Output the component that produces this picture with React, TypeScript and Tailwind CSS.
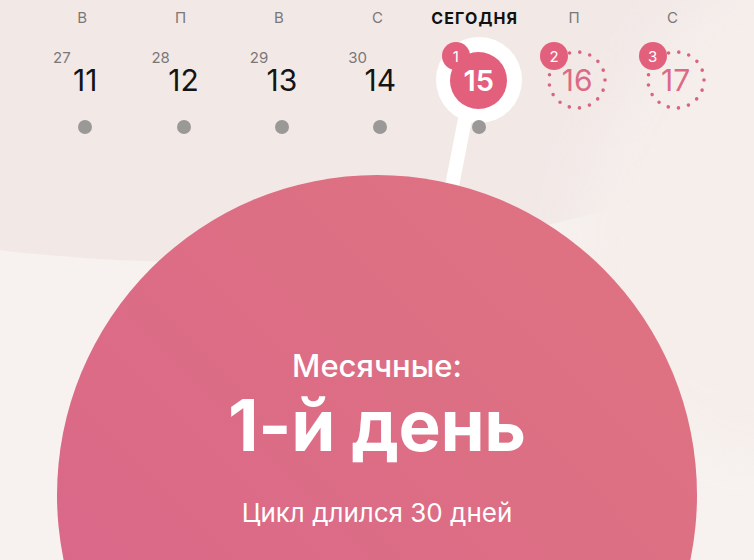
import React from "react";

type Day = {
  week: string;
  day: number;
  prev?: number;
  badge?: number;
  kind: "past" | "today" | "future";
};

const days: Day[] = [
  { week: "В", day: 11, prev: 27, kind: "past" },
  { week: "П", day: 12, prev: 28, kind: "past" },
  { week: "В", day: 13, prev: 29, kind: "past" },
  { week: "С", day: 14, prev: 30, kind: "past" },
  { week: "СЕГОДНЯ", day: 15, badge: 1, kind: "today" },
  { week: "П", day: 16, badge: 2, kind: "future" },
  { week: "С", day: 17, badge: 3, kind: "future" },
];

function Badge({ n }: { n: number }) {
  return (
    <div className="absolute left-[calc(50%-37px)] top-[-8px] flex h-[28px] w-[28px] items-center justify-center rounded-full bg-[#e3607c] text-[15px] leading-none text-white">
      {n}
    </div>
  );
}

function DayCell({ d }: { d: Day }) {
  if (d.kind === "today") {
    return (
      <div className="relative flex h-[60px] items-center justify-center">
        <div className="absolute left-[calc(50%-43px)] top-[-13px] h-[86px] w-[86px] rounded-full bg-white" />
        <div className="relative flex h-[57px] w-[57px] items-center justify-center rounded-full bg-[#e3607c]">
          <span className="text-[29px] font-semibold leading-none text-white">{d.day}</span>
        </div>
        <Badge n={d.badge!} />
      </div>
    );
  }
  if (d.kind === "future") {
    return (
      <div className="relative flex h-[60px] items-center justify-center">
        <svg className="absolute left-[calc(50%-30px)] top-0" width="60" height="60" viewBox="0 0 60 60">
          <circle
            cx="30"
            cy="30"
            r="28"
            fill="none"
            stroke="#d9647f"
            strokeWidth="3.6"
            strokeLinecap="round"
            strokeDasharray="0 10.35"
          />
        </svg>
        <span className="relative text-[30px] leading-none text-[#dc6a85]">{d.day}</span>
        <Badge n={d.badge!} />
      </div>
    );
  }
  return (
    <div className="relative flex h-[60px] items-center justify-center">
      <span className="absolute left-[17px] top-[0px] text-[15px] leading-none text-[#7b7777]">
        {d.prev}
      </span>
      <span className="text-[30px] leading-none text-[#141414]">{d.day}</span>
    </div>
  );
}

export default function App() {
  return (
    <div
      className="relative h-[560px] w-[754px] overflow-hidden bg-[#f7f2ef]"
      style={{ fontFamily: "Inter, 'Noto Sans', sans-serif" }}
    >
      {/* background shapes */}
      <div className="absolute left-[-600px] top-[-485px] h-[747px] w-[1600px] rounded-[50%] bg-[#f2e9e7]" />
      <div className="absolute left-[600px] top-[-60px] h-[520px] w-[420px] rotate-[30deg] rounded-[45%] bg-[#f5eeeb] blur-[24px]" />

      {/* stick from today to the big circle */}
      <svg className="absolute left-[430px] top-[100px] z-10" width="60" height="90" viewBox="0 0 60 90">
        <path d="M36 14 L22 86" stroke="#ffffff" strokeWidth="14" strokeLinecap="butt" />
      </svg>

      <div className="relative z-10 flex flex-col">
        <div className="grid grid-cols-[repeat(7,98.4px)] pl-[36px]">
          {days.map((d, i) => (
            <div key={i} className="flex flex-col">
              <div
                className={
                  d.kind === "today"
                    ? "flex h-[36px] items-center justify-center pr-[8px] text-[16px] font-bold tracking-[0.07em] text-[#111111]"
                    : "flex h-[36px] items-center justify-center pr-[6px] text-[15px] text-[#7b7777]"
                }
              >
                {d.week}
              </div>
              <div className="mt-[14px]">
                <DayCell d={d} />
              </div>
              <div className="mt-[10px] flex h-[14px] justify-center">
                {d.kind !== "future" && (
                  <div className="relative h-[14px] w-[14px] rounded-full bg-[#9b9898]" />
                )}
              </div>
            </div>
          ))}
        </div>

        <div className="mx-auto mt-[41px] flex h-[640px] w-[640px] shrink-0 flex-col items-center rounded-full bg-gradient-to-bl from-[#df7480] to-[#d9658b] pt-[172px] text-white">
          <div className="text-[31px] font-medium leading-[38px]">Месячные:</div>
          <div className="mt-[0px] text-[71px] font-bold leading-[80px] tracking-[-0.005em]">1-й день</div>
          <div className="mt-[32px] text-[26px] leading-[32px]">Цикл длился 30 дней</div>
        </div>
      </div>
    </div>
  );
}
